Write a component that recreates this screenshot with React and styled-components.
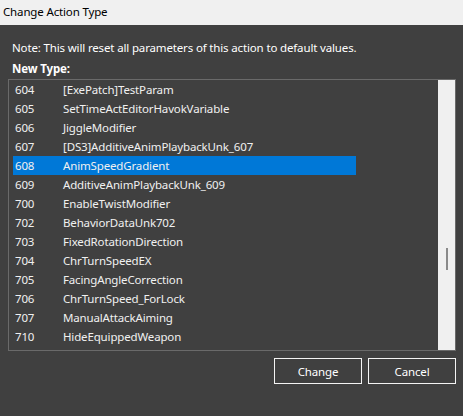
import React from 'react';
import styled, { createGlobalStyle } from 'styled-components';

const GlobalStyle = createGlobalStyle`
  html, body {
    margin: 0;
    padding: 0;
    background: #404040;
  }
  body {
    font-family: "Noto Sans", "Open Sans", sans-serif;
    font-size: 11.5px;
    letter-spacing: -0.15px;
  }
`;

const Window = styled.div`
  width: 463px;
  height: 416px;
  display: flex;
  flex-direction: column;
  overflow: hidden;
`;

const TitleBar = styled.div`
  height: 25px;
  flex: none;
  display: flex;
  align-items: center;
  padding: 0 0 3px 3px;
  box-sizing: border-box;
  background: #f0f0f0;
  color: #000;
`;

const Body = styled.div`
  flex: 1;
  background: #404040;
  color: #fff;
  padding: 15px 7px 0 8px;
  display: flex;
  flex-direction: column;
`;

const Note = styled.div`
  line-height: 16px;
  padding-left: 4px;
`;

const Label = styled.div`
  line-height: 16px;
  margin-top: 5px;
  padding-left: 4px;
  font-weight: bold;
`;

const ListBox = styled.div`
  margin-top: 2px;
  height: 272px;
  box-sizing: border-box;
  border: 1px solid #6a6a6a;
  display: flex;
`;

const Rows = styled.div`
  flex: 1;
  padding-left: 4px;
  overflow: hidden;
`;

const Row = styled.div`
  width: 343px;
  height: 19px;
  display: flex;
  align-items: center;
  color: #f0f0f0;
  background: ${p => (p.$selected ? '#0078d7' : 'transparent')};
`;

const Id = styled.span`
  width: 50px;
  padding-left: 2px;
  box-sizing: border-box;
`;

const Name = styled.span`
  white-space: nowrap;
`;

const ScrollTrack = styled.div`
  width: 17px;
  flex: none;
  background: #f0f0f0;
  position: relative;
`;

const ScrollThumb = styled.div`
  position: absolute;
  left: 8px;
  top: 168px;
  width: 2px;
  height: 22px;
  background: #8a8a8a;
`;

const ButtonRow = styled.div`
  margin-top: 7px;
  display: flex;
  justify-content: flex-end;
  gap: 6px;
`;

const Button = styled.button`
  width: 88px;
  height: 26px;
  box-sizing: border-box;
  border: 1px solid #f4f4f4;
  background: #404040;
  color: #fff;
  font: inherit;
  letter-spacing: inherit;
  padding: 0;
`;

const types = [
  ['604', '[ExePatch]TestParam'],
  ['605', 'SetTimeActEditorHavokVariable'],
  ['606', 'JiggleModifier'],
  ['607', '[DS3]AdditiveAnimPlaybackUnk_607'],
  ['608', 'AnimSpeedGradient'],
  ['609', 'AdditiveAnimPlaybackUnk_609'],
  ['700', 'EnableTwistModifier'],
  ['702', 'BehaviorDataUnk702'],
  ['703', 'FixedRotationDirection'],
  ['704', 'ChrTurnSpeedEX'],
  ['705', 'FacingAngleCorrection'],
  ['706', 'ChrTurnSpeed_ForLock'],
  ['707', 'ManualAttackAiming'],
  ['710', 'HideEquippedWeapon'],
];

export default function App() {
  return (
    <Window>
      <GlobalStyle />
      <TitleBar>Change Action Type</TitleBar>
      <Body>
        <Note>Note: This will reset all parameters of this action to default values.</Note>
        <Label>New Type:</Label>
        <ListBox>
          <Rows>
            {types.map(([id, name]) => (
              <Row key={id} $selected={id === '608'}>
                <Id>{id}</Id>
                <Name>{name}</Name>
              </Row>
            ))}
          </Rows>
          <ScrollTrack>
            <ScrollThumb />
          </ScrollTrack>
        </ListBox>
        <ButtonRow>
          <Button>Change</Button>
          <Button>Cancel</Button>
        </ButtonRow>
      </Body>
    </Window>
  );
}
